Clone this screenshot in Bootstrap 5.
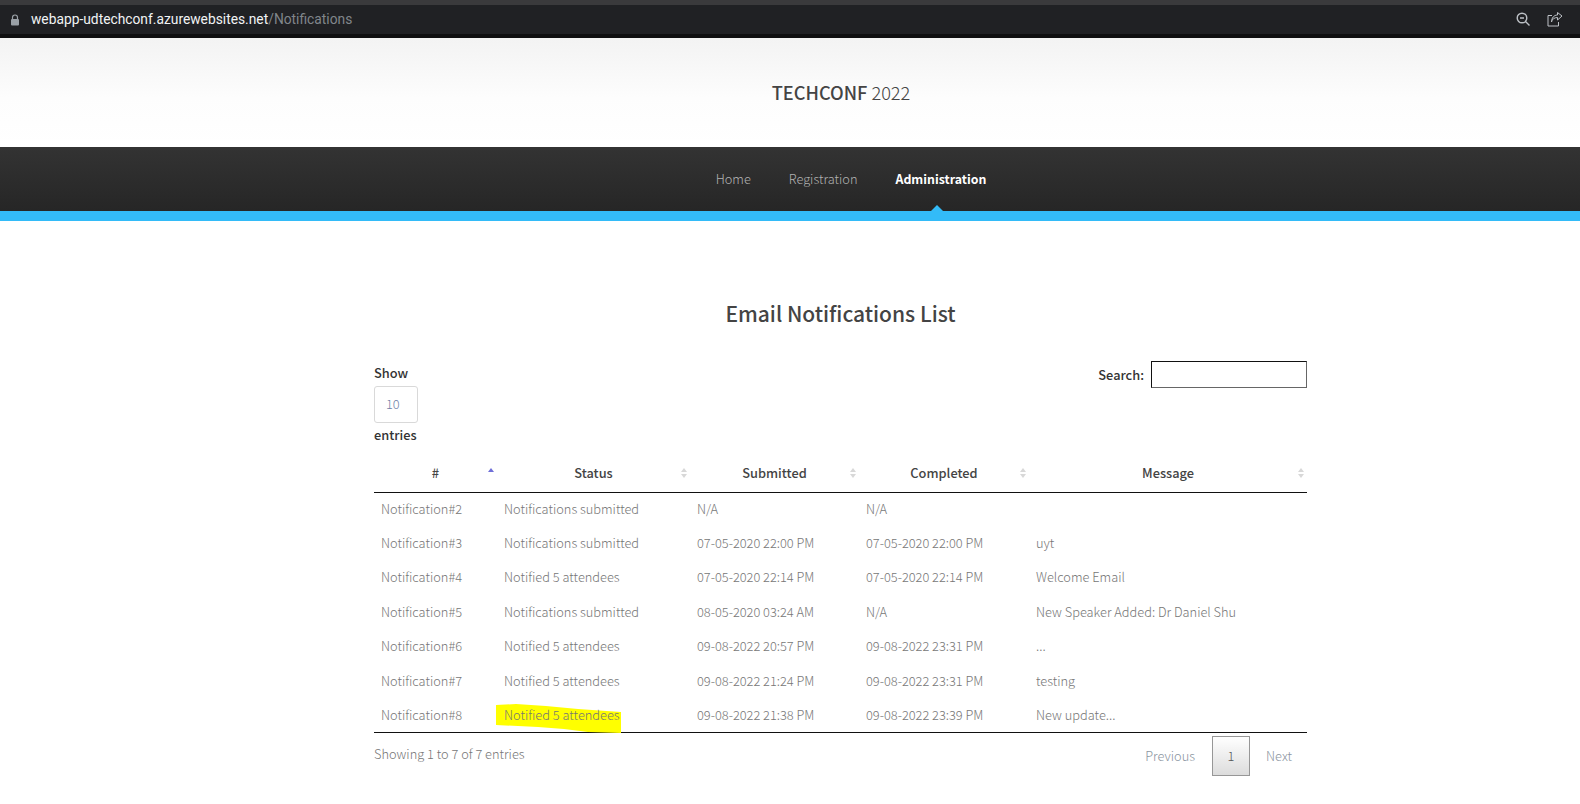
<!DOCTYPE html>
<html lang="en">
  <head>
    <meta charset="UTF-8" />
    <meta name="viewport" content="width=device-width, initial-scale=1.0" />
    <title>TechConf - Notifications</title>
    <link
      href="https://cdn.jsdelivr.net/npm/bootstrap@5.3.0/dist/css/bootstrap.min.css"
      rel="stylesheet"
    />
    <style>
      body {
        font-family: "Noto Sans CJK SC", "Source Sans Pro", "Open Sans", sans-serif;
        font-size: 12.8px;
        font-weight: 300;
        color: #767676;
        background: #fff;
      }

      .addr-bar {
        height: 38px;
        background: #202124;
        border-top: 5px solid #3a3a3c;
        border-bottom: 4px solid #0f0f10;
        padding: 0 17px 0 9px;
        font-family: Roboto, sans-serif;
        font-weight: 400;
        font-size: 13.8px;
      }

      .addr-lock { margin-right: 10px; }
      .addr-host { color: #f1f3f4; }
      .addr-path { color: #80868b; }

      .site-top {
        height: 109px;
        background: linear-gradient(#f3f3f3, #fdfdfd 55%, #fff);
        padding: 41px 0 0 102px;
        color: #444;
        font-size: 18.2px;
        line-height: 26px;
      }

      .site-top b { font-weight: 500; }

      .site-nav {
        height: 64px;
        padding-left: 122px;
        background: linear-gradient(#333, #262626);
        gap: 38px;
      }

      .site-nav .nav-link {
        padding: 0;
        color: #b2b2b2;
        font-size: 12.8px;
        line-height: 20px;
      }

      .site-nav .nav-link.active {
        color: #fff;
        font-weight: 700;
        font-size: 12.35px;
        position: relative;
      }

      .site-nav .nav-link.active::after {
        content: "";
        position: absolute;
        left: 50%;
        bottom: -22px;
        margin-left: -10px;
        border: 6px solid transparent;
        border-top: 0;
        border-bottom-color: #33bbf8;
      }

      .site-stripe { height: 10px; background: #33bbf8; }

      .page-body { width: 933px; margin: 0 auto 0 374px; }

      .list-title {
        margin: 75px 0 31px;
        color: #444;
        font-size: 21px;
        line-height: 34px;
        font-weight: 500;
        text-align: center;
      }

      .tbl-controls { height: 89px; color: #333; font-weight: 500; font-size: 12.8px; }

      .tbl-controls label { display: block; line-height: 20px; }

      .len-block { padding-top: 2px; }

      .len-select.form-select {
        width: 44px;
        height: 37px;
        margin: 3px 0 2px;
        padding: 0 0 2px 11px;
        background-image: none;
        border-color: #d9d9d9;
        border-radius: 3px;
        color: #6f7fa8;
        font-size: 12.8px;
        font-weight: 300;
      }

      .search-box {
        width: 156px;
        height: 27px;
        border: 1px solid #111;
        border-right-color: #666;
        border-bottom-color: #666;
        margin-left: 7px;
      }

      .notif-table { table-layout: fixed; margin: 0; color: #767676; }

      .notif-table th {
        position: relative;
        height: 42px;
        padding: 4px 0 0;
        text-align: center;
        vertical-align: middle;
        font-size: 12.8px;
        font-weight: 500;
        color: #444;
        border-bottom: 1px solid #111;
        --bs-table-bg: transparent;
      }

      .notif-table th::before,
      .notif-table th::after {
        content: "";
        position: absolute;
        right: 3px;
        border: 3px solid transparent;
      }

      .notif-table th::before { top: 18px; border-top: 0; border-bottom: 4px solid #d8d8d8; }
      .notif-table th::after { top: 24px; border-bottom: 0; border-top: 4px solid #d8d8d8; }
      .notif-table th.sort-asc::before { border-bottom-color: #6f6fd8; }
      .notif-table th.sort-asc::after { display: none; }

      .notif-table td {
        height: 34.4px;
        padding: 0 0 2px 7px;
        vertical-align: middle;
        font-size: 12.8px;
        white-space: nowrap;
        border: 0;
        --bs-table-bg: transparent;
        color: #767676;
      }

      .notif-table tbody tr:last-child td { border-bottom: 1px solid #111; }

      .marked { position: relative; }
      .marked span { position: relative; }

      .marker {
        position: absolute;
        left: -1px;
        top: 1px;
        width: 126px;
        height: 35px;
      }

      .tbl-foot { height: 44px; }
      .foot-info { padding-top: 11px; }

      .tbl-pages { margin-top: 3px; }

      .tbl-pages .page-link {
        border: 1px solid transparent;
        background: transparent;
        color: #8a94a0;
        padding: 0;
        font-size: 12.8px;
        line-height: 38px;
      }

      .tbl-pages .page-item.active .page-link {
        width: 38px;
        margin: 0 16px;
        text-align: center;
        color: #555;
        border: 1px solid #979797;
        border-radius: 0;
        background: linear-gradient(#fff, #dcdcdc);
      }

      .tbl-pages .last-link { margin-right: 14px; }
    </style>
  </head>
  <body>
    <!-- Browser address bar -->
    <div class="addr-bar d-flex align-items-center">
      <svg width="12" height="12" viewBox="0 0 12 12" class="addr-lock flex-shrink-0">
        <path d="M3.500 5V3.500a2.500 2.500 0 0 1 5 0V5" fill="none" stroke="#9aa0a6" stroke-width="1.2" />
        <rect x="2" y="5" width="8" height="6.500" rx="1" fill="#9aa0a6" />
      </svg>
      <span class="addr-host">webapp-udtechconf.azurewebsites.net<span class="addr-path">/Notifications</span></span>
      <div class="ms-auto d-flex align-items-center gap-3">
        <svg width="15" height="15" viewBox="0 0 15 15">
          <circle cx="6" cy="6" r="4.800" fill="none" stroke="#bdc1c6" stroke-width="1.400" />
          <path d="M4 6h4M9.500 9.500l4 4" stroke="#bdc1c6" stroke-width="1.400" />
        </svg>
        <svg width="16" height="15" viewBox="0 0 16 15">
          <path d="M5 3.500H1v10.500h10.500V10" fill="none" stroke="#bdc1c6" />
          <path d="M4.500 10c.5-3 3-4.500 6-4.500V8l4.500-4-4.500-3.500V3C7 3 4.500 6 4.500 10z" fill="none" stroke="#bdc1c6" />
        </svg>
      </div>
    </div>

    <!-- Site header -->
    <header class="site-top text-center"><b>TECHCONF</b> 2022</header>
    <nav class="site-nav nav justify-content-center align-items-center">
      <a class="nav-link" href="#">Home</a>
      <a class="nav-link" href="#">Registration</a>
      <a class="nav-link active" href="#">Administration</a>
    </nav>
    <div class="site-stripe"></div>

    <main class="page-body">
      <h1 class="list-title">Email Notifications List</h1>

      <div class="tbl-controls d-flex justify-content-between align-items-start">
        <div class="len-block">
          <label for="pageLen">Show</label>
          <select id="pageLen" class="form-select len-select"><option>10</option></select>
          <label for="pageLen">entries</label>
        </div>
        <div class="d-flex align-items-center">
          <label for="searchBox">Search:</label>
          <input id="searchBox" class="search-box" type="text" />
        </div>
      </div>

      <table class="table notif-table">
        <colgroup>
          <col style="width: 123px" />
          <col style="width: 193px" />
          <col style="width: 169px" />
          <col style="width: 170px" />
          <col style="width: 278px" />
        </colgroup>
        <thead>
          <tr>
            <th class="sort-asc">#</th>
            <th>Status</th>
            <th>Submitted</th>
            <th>Completed</th>
            <th>Message</th>
          </tr>
        </thead>
        <tbody>
          <tr><td>Notification#2</td><td>Notifications submitted</td><td>N/A</td><td>N/A</td><td></td></tr>
          <tr><td>Notification#3</td><td>Notifications submitted</td><td>07-05-2020 22:00 PM</td><td>07-05-2020 22:00 PM</td><td>uyt</td></tr>
          <tr><td>Notification#4</td><td>Notified 5 attendees</td><td>07-05-2020 22:14 PM</td><td>07-05-2020 22:14 PM</td><td>Welcome Email</td></tr>
          <tr><td>Notification#5</td><td>Notifications submitted</td><td>08-05-2020 03:24 AM</td><td>N/A</td><td>New Speaker Added: Dr Daniel Shu</td></tr>
          <tr><td>Notification#6</td><td>Notified 5 attendees</td><td>09-08-2022 20:57 PM</td><td>09-08-2022 23:31 PM</td><td>...</td></tr>
          <tr><td>Notification#7</td><td>Notified 5 attendees</td><td>09-08-2022 21:24 PM</td><td>09-08-2022 23:31 PM</td><td>testing</td></tr>
          <tr>
            <td>Notification#8</td>
            <td class="marked">
              <svg class="marker" viewBox="0 0 126 35">
                <path d="M0 6 20 5 50 7 82 10 125 13V34L92 33 68 30 42 28 0 26Z" fill="#ffff00" />
              </svg>
              <span>Notified 5 attendees</span>
            </td>
            <td>09-08-2022 21:38 PM</td><td>09-08-2022 23:39 PM</td><td>New update...</td>
          </tr>
        </tbody>
      </table>

      <div class="tbl-foot d-flex justify-content-between align-items-start">
        <div class="foot-info">Showing 1 to 7 of 7 entries</div>
        <ul class="pagination tbl-pages mb-0">
          <li class="page-item"><a class="page-link" href="#">Previous</a></li>
          <li class="page-item active"><a class="page-link" href="#">1</a></li>
          <li class="page-item"><a class="page-link last-link" href="#">Next</a></li>
        </ul>
      </div>
    </main>
    <script src="https://cdn.jsdelivr.net/npm/bootstrap@5.3.0/dist/js/bootstrap.bundle.min.js"></script>
  </body>
</html>
